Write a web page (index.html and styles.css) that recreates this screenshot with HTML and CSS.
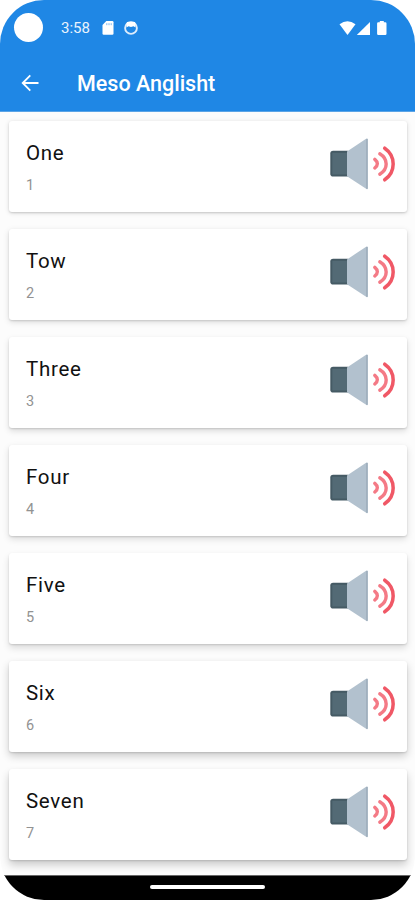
FILE: index.html
```html
<!DOCTYPE html>
<html lang="en">
<head>
<meta charset="utf-8">
<title>Meso Anglisht</title>
<link rel="stylesheet" href="styles.css">
</head>
<body>
<svg class="defs" width="0" height="0">
  <symbol id="speaker" viewBox="0 0 68 54">
    <rect x="1.3" y="13.8" width="20" height="25.7" rx="2.8" fill="#455a64"/>
    <rect x="3.3" y="15.8" width="15" height="21.7" fill="#536a75"/>
    <path d="M18 14.4 37.5 1.6Q38.8 1 38.8 2.4V51.2Q38.8 52.6 37.5 52L18 39.2Z" fill="#b2c1ce"/>
    <path d="M37.9 2V51.7" stroke="#9fafbd" stroke-width="1.6"/>
    <g fill="none" stroke="#f47a86" stroke-linecap="round">
      <path d="M45.8 22.4Q50.9 26.7 45.8 31" stroke-width="3.4"/>
      <path d="M50.8 16.8C59.3 22 59.3 32 50.8 37.2" stroke-width="3.4"/>
      <path d="M55.7 11.2C67 19 67 35 55.7 42.8" stroke-width="3.5" stroke="#f05866"/>
    </g>
  </symbol>
</svg>
<div class="screen">
  <header class="top">
    <div class="status">
      <span class="camera"></span>
      <span class="time">3:58</span>
      <svg class="sd" width="12" height="14" viewBox="0 0 12 14"><path d="M4.3 0H10.3Q11.5 0 11.5 1.2V12.6Q11.5 13.8 10.3 13.8H1.7Q.5 13.8.5 12.6V4Z" fill="#fff"/><path d="M4.8 2.2v2M7 2.2v2M9.2 2.2v2" stroke="#7db8ef" stroke-width="1"/></svg>
      <svg class="face" width="14" height="14" viewBox="0 0 14 14"><circle cx="7" cy="7" r="5.9" fill="none" stroke="#dcecfc" stroke-width="1.9"/><path d="M2.5 6.4V2.6L3 1Q7 .4 11 1L11.5 2.6V6.4L9.5 5.2 7 6 4.5 5.2Z" fill="#fff"/></svg>
      <svg class="signals" width="48" height="15" viewBox="0 0 48 15" fill="#fff"><path d="M.5 3.2Q8.5-2.5 16.5 3.2L8.5 14Z"/><path d="M31 1V14H17.8Z"/><path d="M40.8 0h4v1.3h1.5q1.2 0 1.2 1.2v10.2q0 1.3-1.2 1.3h-7q-1.2 0-1.2-1.3V2.5q0-1.2 1.2-1.2h1.5Z"/></svg>
    </div>
    <div class="bar">
      <svg class="back" width="18" height="18" viewBox="0 0 18 18" fill="none" stroke="#fff" stroke-width="1.8"><path d="M17.5 9H2M9.3 1.4 1.7 9l7.6 7.6"/></svg>
      <h1>Meso Anglisht</h1>
    </div>
  </header>
  <main class="list">
    <article class="card s1"><div><h2>One</h2><p>1</p></div><svg class="speaker"><use href="#speaker"/></svg></article>
    <article class="card s2"><div><h2>Tow</h2><p>2</p></div><svg class="speaker"><use href="#speaker"/></svg></article>
    <article class="card s3"><div><h2>Three</h2><p>3</p></div><svg class="speaker"><use href="#speaker"/></svg></article>
    <article class="card s4"><div><h2>Four</h2><p>4</p></div><svg class="speaker"><use href="#speaker"/></svg></article>
    <article class="card s5"><div><h2>Five</h2><p>5</p></div><svg class="speaker"><use href="#speaker"/></svg></article>
    <article class="card s6"><div><h2>Six</h2><p>6</p></div><svg class="speaker"><use href="#speaker"/></svg></article>
    <article class="card s7"><div><h2>Seven</h2><p>7</p></div><svg class="speaker"><use href="#speaker"/></svg></article>
  </main>
  <footer class="nav"><span class="pill"></span></footer>
</div>
</body>
</html>
```
FILE: styles.css
```css
* { box-sizing: border-box; margin: 0; }
body { background: #fff; font-family: Roboto, sans-serif; }
.defs { display: block; }
.screen {
  width: 415px;
  height: 900px;
  display: flex;
  flex-direction: column;
  border-radius: 44px;
  overflow: hidden;
  background: #fcfcfc;
}
.top { height: 112px; background: #1f87e5; border-bottom: 1px solid #5ba4e6; color: #fff; }
.status { height: 56px; display: flex; align-items: center; padding: 0 28px 0 14px; }
.camera { width: 29px; height: 29px; border-radius: 50%; background: #fff; margin-top: -2px; }
.time { margin-left: 18px; width: 30px; font-size: 15px; line-height: 20px; color: #e9f3fd; }
.sd { margin-left: 11px; }
.face { margin-left: 10px; }
.signals { margin-left: auto; }
.bar { height: 55px; display: flex; align-items: center; padding-left: 21px; }
.back { margin-top: -2px; }
h1 { margin-left: 38px; font-size: 21.5px; font-weight: 500; line-height: 28px; }
.list { flex: 1; display: flex; flex-direction: column; gap: 17px; padding: 9px 8px 0 9px; min-height: 0; }
.card {
  height: 91px;
  flex: none;
  display: flex;
  justify-content: space-between;
  padding: 17px 10px 0 17px;
  background: #fff;
  border-radius: 3px;
}
.s1 { box-shadow: 0 1px 2px #0002, 0 1px 5px #0002; }
.s2 { box-shadow: 0 1px 2px #0002, 0 2px 6px #0002; }
.s3 { box-shadow: 0 1px 2px #0002, 0 3px 6px #0002; }
.s4 { box-shadow: 0 1px 2px #0002, 0 3px 7px #0002; }
.s5 { box-shadow: 0 1px 2px #0002, 0 4px 7px #0002; }
.s6 { box-shadow: 0 1px 2px #0002, 0 4px 8px #0003; }
.s7 { box-shadow: 0 1px 2px #0002, 0 5px 8px #0003; }
h2 { font-size: 20.5px; font-weight: 400; line-height: 30px; letter-spacing: .7px; color: #111; }
.card p { margin-top: 8px; font-size: 14.5px; line-height: 20px; color: #929292; }
.speaker { width: 68px; height: 54px; margin-top: -1px; }
.nav { height: 25px; background: #000; border-top: 1px solid #666; display: flex; justify-content: center; }
.pill { width: 115px; height: 4px; margin-top: 9px; border-radius: 2px; background: #fff; }
```
